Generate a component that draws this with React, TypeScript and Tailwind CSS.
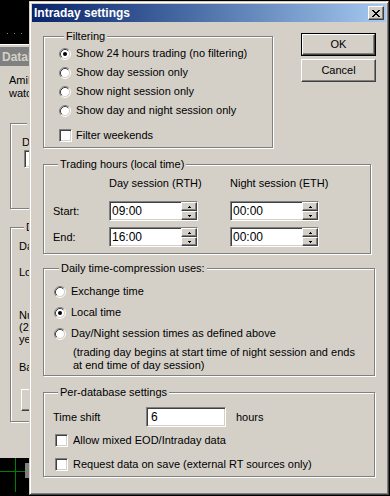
import React from 'react';

const raised =
  'bg-[#d4d0c8] border border-t-white border-l-white border-r-[#404040] border-b-[#404040] shadow-[inset_-1px_-1px_#808080]';
const sunken =
  'bg-white border border-t-[#808080] border-l-[#808080] border-r-white border-b-white shadow-[inset_1px_1px_#404040,inset_-1px_-1px_#d4d0c8]';
const etched = 'border border-[#808080] shadow-[1px_1px_0_white,inset_1px_1px_0_white]';

const Radio = ({ checked = false }: { checked?: boolean }) => (
  <svg width="12" height="12" viewBox="0 0 12 12" className="shrink-0">
    <circle cx="6" cy="6" r="4.5" fill="white" />
    <path d="M2.11 9.89 A5.5 5.5 0 0 1 9.89 2.11" stroke="#808080" fill="none" />
    <path d="M9.89 2.11 A5.5 5.5 0 0 1 2.11 9.89" stroke="white" fill="none" />
    <path d="M2.82 9.18 A4.5 4.5 0 0 1 9.18 2.82" stroke="#404040" fill="none" />
    <path d="M9.18 2.82 A4.5 4.5 0 0 1 2.82 9.18" stroke="#d4d0c8" fill="none" />
    {checked && <circle cx="6" cy="6" r="2" fill="black" />}
  </svg>
);

const Check = () => <span className={`w-[13px] h-[13px] shrink-0 ${sunken}`} />;

const GroupBox = ({ title, className, children }: { title: string; className: string; children: React.ReactNode }) => (
  <fieldset className={`${etched} ${className}`}>
    <legend className="ml-[5px] px-[2px] leading-[14px] bg-[#d4d0c8]">{title}</legend>
    {children}
  </fieldset>
);

const SpinBtn = ({ up }: { up?: boolean }) => (
  <div className={`flex-1 flex items-center justify-center ${raised}`}>
    <svg width="3" height="2" viewBox="0 0 3 2" shapeRendering="crispEdges">
      {up ? (
        <>
          <rect x="1" y="0" width="1" height="1" />
          <rect x="0" y="1" width="3" height="1" />
        </>
      ) : (
        <>
          <rect x="0" y="0" width="3" height="1" />
          <rect x="1" y="1" width="1" height="1" />
        </>
      )}
    </svg>
  </div>
);

const TimeField = ({ value }: { value: string }) => (
  <div className={`w-[89px] h-[20px] flex ${sunken}`}>
    <span className="flex-1 pl-[2px] flex items-center text-[12px]">{value}</span>
    <div className="w-[16px] flex flex-col">
      <SpinBtn up />
      <SpinBtn />
    </div>
  </div>
);

const RadioRow = ({ label, checked, h }: { label: string; checked?: boolean; h: string }) => (
  <div className={`flex items-center gap-[5px] ${h}`}>
    <Radio checked={checked} />
    <span>{label}</span>
  </div>
);

const CloseGlyph = () => (
  <svg width="8" height="7" viewBox="0 0 8 7" shapeRendering="crispEdges">
    <rect x="0" y="0" width="2" height="1" />
    <rect x="6" y="0" width="2" height="1" />
    <rect x="1" y="1" width="2" height="1" />
    <rect x="5" y="1" width="2" height="1" />
    <rect x="2" y="2" width="4" height="1" />
    <rect x="3" y="3" width="2" height="1" />
    <rect x="2" y="4" width="4" height="1" />
    <rect x="1" y="5" width="2" height="1" />
    <rect x="5" y="5" width="2" height="1" />
    <rect x="0" y="6" width="2" height="1" />
    <rect x="6" y="6" width="2" height="1" />
  </svg>
);

// window behind the dialog, only its left strip shows
const BackWindow = () => (
  <div className="absolute left-[-3px] top-[44px] w-[70px] h-[414px] overflow-hidden bg-[#d4d0c8] border-t border-l border-white flex flex-col">
    <div className="ml-[1px] mt-[2px] w-[200px] h-[19px] bg-[#808080] pl-[3px] flex items-center text-[#d4d0c8] font-bold text-[12px]">
      Datab
    </div>
    <div className="pl-[11px] flex flex-col">
      <p className="mt-[8px] leading-[13px]">
        AmiB
        <br />
        watc
      </p>
      <fieldset className={`mt-[16px] ml-[1px] w-[200px] ${etched} pl-[11px] pt-[6px] pb-[40px]`}>
        <legend className="ml-[5px] px-[2px] leading-[14px] bg-[#d4d0c8]">Ge</legend>
        <p className="leading-[13px]">Da</p>
        <div className={`mt-[1px] ml-[2px] w-[100px] h-[18px] ${sunken}`} />
      </fieldset>
      <fieldset className={`mt-[11px] ml-[1px] w-[200px] ${etched} pl-[8px] pt-[6px] pb-[10px]`}>
        <legend className="ml-[5px] px-[2px] leading-[14px] bg-[#d4d0c8]">Da</legend>
        <p className="leading-[13px]">Da</p>
        <p className="mt-[13px] leading-[13px]">Lo</p>
        <p className="mt-[30px] leading-[12px]">
          Nu
          <br />
          (2
          <br />
          ye
        </p>
        <p className="mt-[16px] leading-[13px]">Ba</p>
        <div className={`mt-[15px] ml-[2px] w-[80px] h-[22px] ${raised}`} />
      </fieldset>
    </div>
  </div>
);

export default function App() {
  return (
    <div className="relative w-[390px] h-[496px] overflow-hidden bg-black font-['Liberation_Sans',Arial,sans-serif] text-[11px] text-black">
      <div className="absolute top-[33px] left-[7px] flex gap-[6px]">
        <span className="w-[1px] h-[1px] bg-[#808080]" />
        <span className="w-[1px] h-[1px] bg-[#808080]" />
        <span className="w-[1px] h-[1px] bg-[#808080]" />
      </div>
      <BackWindow />
      <div className="absolute left-0 top-[471px] w-[28px] h-[1px] bg-[#008000]" />
      <div className="absolute left-[15px] top-[458px] w-[1px] h-[34px] bg-[#008000]" />
      <div className="absolute left-[25px] top-[463px] w-[4px] h-[15px] bg-[#808080]" />

      {/* Intraday settings dialog */}
      <div className="absolute left-[29px] top-[1px] w-[360px] h-[494px] bg-[#d4d0c8] border border-t-[#d4d0c8] border-l-[#d4d0c8] border-r-[#404040] border-b-[#404040] shadow-[inset_1px_1px_white,inset_-1px_-1px_#808080] p-[2px] flex flex-col">
        <div className="h-[18px] shrink-0 bg-linear-to-r from-[#0a246a] to-[#a6caf0] flex items-center justify-between pl-[2px] pr-[2px]">
          <span className="text-white font-bold text-[12px]">Intraday settings</span>
          <div className={`w-[16px] h-[14px] flex items-center justify-center ${raised}`}>
            <CloseGlyph />
          </div>
        </div>

        <div className="flex flex-col pl-[11px] pt-[7px]">
          <div className="flex items-start">
            <GroupBox title="Filtering" className="w-[230px] pl-[15px] pt-[1px] pb-[2px]">
              <RadioRow label="Show 24 hours trading (no filtering)" checked h="h-[19px]" />
              <RadioRow label="Show day session only" h="h-[19px]" />
              <RadioRow label="Show night session only" h="h-[19px]" />
              <RadioRow label="Show day and night session only" h="h-[19px]" />
              <div className="mt-[6px] h-[19px] flex items-center gap-[4px]">
                <Check />
                <span>Filter weekends</span>
              </div>
            </GroupBox>
            <div className="ml-[28px] mt-[4px] flex flex-col gap-[3px]">
              <div className="border border-black">
                <div className={`w-[73px] h-[21px] flex items-center justify-center ${raised}`}>OK</div>
              </div>
              <div className={`w-[75px] h-[23px] flex items-center justify-center ${raised}`}>Cancel</div>
            </div>
          </div>

          <GroupBox title="Trading hours (local time)" className="mt-[9px] w-[328px] pl-[9px] pt-[5px] pb-[6px]">
            <div className="flex items-center h-[14px]">
              <span className="w-[56px]" />
              <span className="w-[121px]">Day session (RTH)</span>
              <span>Night session (ETH)</span>
            </div>
            <div className="mt-[11px] flex items-center">
              <span className="w-[56px]">Start:</span>
              <div className="w-[121px]">
                <TimeField value="09:00" />
              </div>
              <TimeField value="00:00" />
            </div>
            <div className="mt-[6px] flex items-center">
              <span className="w-[56px]">End:</span>
              <div className="w-[121px]">
                <TimeField value="16:00" />
              </div>
              <TimeField value="00:00" />
            </div>
          </GroupBox>

          <GroupBox title="Daily time-compression uses:" className="mt-[7px] w-[332px] pl-[10px] pt-[6px] pb-[3px]">
            <RadioRow label="Exchange time" h="h-[21px]" />
            <RadioRow label="Local time" checked h="h-[21px]" />
            <RadioRow label="Day/Night session times as defined above" h="h-[21px]" />
            <p className="pl-[19px] pt-[2px] leading-[13px]">
              (trading day begins at start time of night session and ends
              <br />
              at end time of day session)
            </p>
          </GroupBox>

          <GroupBox title="Per-database settings" className="mt-[9px] w-[332px] pl-[9px] pt-[8px]">
            <div className="flex items-center">
              <span className="w-[93px]">Time shift</span>
              <div className={`w-[80px] h-[20px] flex items-center pl-[4px] text-[12px] ${sunken}`}>6</div>
              <span className="ml-[10px]">hours</span>
            </div>
            <div className="mt-[1px] pl-[2px] h-[24px] flex items-center gap-[5px]">
              <Check />
              <span>Allow mixed EOD/Intraday data</span>
            </div>
            <div className="pl-[2px] h-[24px] flex items-center gap-[5px]">
              <Check />
              <span>Request data on save (external RT sources only)</span>
            </div>
          </GroupBox>
        </div>
      </div>
    </div>
  );
}
